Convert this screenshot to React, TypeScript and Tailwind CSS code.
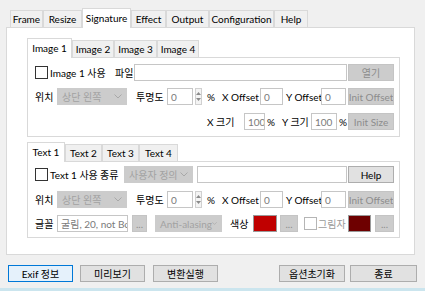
import type { ReactNode } from "react";

const Chevron = () => (
    <svg width={8} height={5} viewBox="0 0 8 5" fill="none" xmlns="http://www.w3.org/2000/svg">
        <path d="M0.5 0.5L4 4L7.5 0.5" stroke="#a8a8a8" strokeWidth={1} />
    </svg>
);

const Spin = () => (
    <div className="ml-[2px] flex h-[17px] w-[7px] shrink-0 flex-col items-center justify-center gap-[3px] border border-[#d0d0d0] bg-[#f4f4f4]">
        <svg width={5} height={3} viewBox="0 0 5 3"><path d="M0 3L2.5 0L5 3Z" fill="#8a8a8a" /></svg>
        <svg width={5} height={3} viewBox="0 0 5 3"><path d="M0 0L2.5 3L5 0Z" fill="#8a8a8a" /></svg>
    </div>
);

const Check = () => <div className="h-[13px] w-[13px] shrink-0 border border-[#333333] bg-white" />;

const Field = ({ className, children }: { className: string; children?: ReactNode }) => (
    <div className={`flex h-[17px] shrink-0 items-center overflow-hidden border border-[#c6c6c6] bg-white pl-[3px] text-[#7a7a7a] ${className}`}>
        {children}
    </div>
);

const Select = ({ className, children }: { className: string; children: ReactNode }) => (
    <div className={`flex h-[17px] shrink-0 items-center justify-between bg-[#cccccc] pl-[5px] pr-[5px] text-[#a2a2a2] ${className}`}>
        <span>{children}</span>
        <Chevron />
    </div>
);

const Btn = ({ className, children, disabled }: { className: string; children?: ReactNode; disabled?: boolean }) => (
    <div
        className={`flex h-[17px] shrink-0 items-center justify-center overflow-hidden border ${
            disabled ? "border-[#c4c4c4] bg-[#cccccc] text-[#8c8c8c]" : "border-[#adadad] bg-[#e1e1e1] text-black"
        } ${className}`}
    >
        {children}
    </div>
);

// 위치 / 투명도 / offset row, shared by both groups
const PositionRow = () => (
    <div className="flex h-[17px] items-center">
        <span className="w-[22px] shrink-0">위치</span>
        <Select className="w-[70px]">상단 왼쪽</Select>
        <span className="ml-[9px] w-[31px] shrink-0">투명도</span>
        <Field className="w-[26px]">0</Field>
        <Spin />
        <span className="ml-[5px] w-[15px] shrink-0">%</span>
        <span className="w-[38px] shrink-0">X Offset</span>
        <Field className="w-[23px]">0</Field>
        <span className="ml-[3px] w-[35px] shrink-0">Y Offset</span>
        <Field className="w-[25px]">0</Field>
        <Btn disabled className="ml-[2px] w-[46px]">Init Offset</Btn>
    </div>
);

const TopTab = ({ label, w, active }: { label: string; w: string; active?: boolean }) => (
    <div
        className={`flex shrink-0 items-center justify-center border border-b-0 border-[#d9d9d9] ${w} ${
            active ? "relative z-10 -mb-px h-[20px] bg-white pb-[2px]" : "h-[17px] bg-[#f0f0f0]"
        }`}
    >
        {label}
    </div>
);

const SubTabs = ({ labels, widths }: { labels: string[]; widths: string[] }) => (
    <div className="flex h-[18px] items-end">
        {labels.map((l, i) => (
            <TopTab key={l} label={l} w={widths[i]} active={i === 0} />
        ))}
    </div>
);

export default function App() {
    return (
        <div className="relative h-[291px] w-[425px] overflow-hidden whitespace-nowrap bg-[#f0f0f0] font-['Lato','Noto_Sans_CJK_KR',sans-serif] text-[10px] leading-none text-black">
            <div className="flex h-[27px] items-end pl-[10px]">
                <TopTab label="Frame" w="w-[33px]" />
                <TopTab label="Resize" w="w-[39px]" />
                <TopTab label="Signature" w="w-[49px]" active />
                <TopTab label="Effect" w="w-[35px]" />
                <TopTab label="Output" w="w-[43px]" />
                <TopTab label="Configuration" w="w-[65px]" />
                <TopTab label="Help" w="w-[34px]" />
            </div>

            <div className="ml-[6px] h-[228px] w-[409px] border border-[#d9d9d9] bg-white pl-[20px] pt-[11px]">
                <SubTabs labels={["Image 1", "Image 2", "Image 3", "Image 4"]} widths={["w-[45px]", "w-[42px]", "w-[43px]", "w-[42px]"]} />
                <div className="flex h-[80px] w-[373px] flex-col border border-[#d9d9d9] pl-[7px] pt-[6px]">
                    <div className="flex h-[17px] items-center">
                        <div className="flex w-[80px] shrink-0 items-center gap-[2px]">
                            <Check />
                            <span>Image 1 사용</span>
                        </div>
                        <span className="w-[19px] shrink-0">파일</span>
                        <Field className="w-[213px]" />
                        <Btn disabled className="ml-[1px] w-[46px]">열기</Btn>
                    </div>
                    <div className="mt-[7px]">
                        <PositionRow />
                    </div>
                    <div className="mt-[8px] flex h-[17px] items-center pl-[172px]">
                        <span className="w-[37px] shrink-0">X 크기</span>
                        <Field className="w-[21px]">100</Field>
                        <span className="ml-[2px] w-[15px] shrink-0">%</span>
                        <span className="w-[29px] shrink-0">Y 크기</span>
                        <Field className="w-[26px]">100</Field>
                        <span className="ml-[2px] w-[9px] shrink-0">%</span>
                        <Btn disabled className="w-[46px]">Init Size</Btn>
                    </div>
                </div>

                <div className="mt-[6px]">
                    <SubTabs labels={["Text 1", "Text 2", "Text 3", "Text 4"]} widths={["w-[38px]", "w-[37px]", "w-[37px]", "w-[39px]"]} />
                </div>
                <div className="flex h-[77px] w-[373px] flex-col border border-[#d9d9d9] pl-[7px] pt-[4px]">
                    <div className="flex h-[17px] items-center">
                        <div className="flex w-[65px] shrink-0 items-center gap-[2px]">
                            <Check />
                            <span>Text 1 사용</span>
                        </div>
                        <span className="w-[24px] shrink-0">종류</span>
                        <Select className="w-[69px]">사용자 정의</Select>
                        <Field className="ml-[4px] w-[150px]" />
                        <Btn className="ml-[1px] w-[46px]">Help</Btn>
                    </div>
                    <div className="mt-[8px]">
                        <PositionRow />
                    </div>
                    <div className="mt-[7px] flex h-[17px] items-center">
                        <span className="w-[22px] shrink-0">글꼴</span>
                        <Field className="w-[71px]">굴림, 20, not Bold</Field>
                        <Btn disabled className="ml-[4px] w-[15px]">...</Btn>
                        <Select className="ml-[8px] w-[67px]">Anti-alasing</Select>
                        <span className="ml-[8px] w-[23px] shrink-0">색상</span>
                        <div className="h-[17px] w-[24px] shrink-0 border border-[#9a9a9a] bg-[#c00000]" />
                        <Btn disabled className="ml-[3px] w-[18px]">...</Btn>
                        <div className="ml-[6px] h-[13px] w-[13px] shrink-0 border border-[#b5b5b5] bg-white" />
                        <span className="ml-[1px] w-[30px] shrink-0 text-[#9a9a9a]">그림자</span>
                        <div className="h-[17px] w-[23px] shrink-0 border border-[#9a9a9a] bg-[#6e0000]" />
                        <Btn disabled className="ml-[4px] w-[19px]">...</Btn>
                    </div>
                </div>
            </div>

            <div className="mt-[10px] flex h-[17px] items-center pl-[8px]">
                <div className="flex h-[17px] w-[65px] items-center justify-center border border-[#0078d7] bg-[#e5f1fb]">Exif 정보</div>
                <Btn className="ml-[7px] w-[65px]">미리보기</Btn>
                <Btn className="ml-[8px] w-[65px]">변환실행</Btn>
                <Btn className="ml-[61px] w-[66px]">옵션초기화</Btn>
                <Btn className="ml-[5px] w-[67px]">종료</Btn>
            </div>

            <div className="absolute bottom-0 left-0 h-[3px] w-full bg-[#cbe5ee]" />
        </div>
    );
}
